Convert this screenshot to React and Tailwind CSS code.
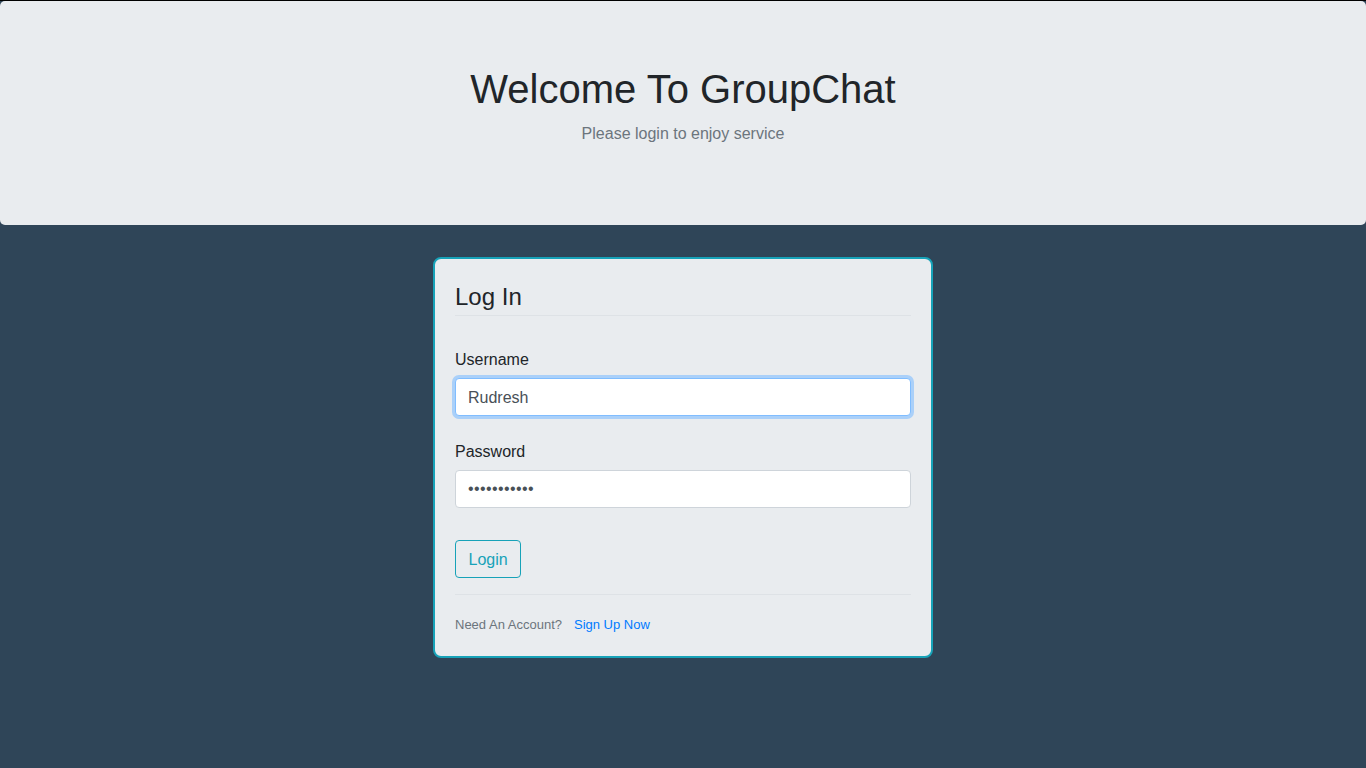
export default function App() {
  return (
    <div
      className="min-h-screen bg-[#2f4558] text-[#212529]"
      style={{ fontFamily: '"Liberation Sans", Arial, sans-serif' }}
    >
      <div className="h-px bg-black" />
      {/* Jumbotron */}
      <div className="bg-[#e9ecef] rounded-[5px] h-[224px] pt-[64px] text-center">
        <h1 className="text-[40px] leading-[48px] mb-[9px]">Welcome To GroupChat</h1>
        <p className="text-base leading-6 text-[#6c757d]">Please login to enjoy service</p>
      </div>

      {/* Login card */}
      <div className="w-[500px] mx-auto mt-[32px] bg-[#e9ecef] border-2 border-[#17a2b8] rounded-[8px] px-[20px] pt-[20px] pb-[19px]">
        <div className="text-2xl leading-[36px] border-b border-[#dee2e6] h-[37px]">Log In</div>

        <label className="block mt-[32px] leading-6 text-base">Username</label>
        <input
          defaultValue="Rudresh"
          className="block w-full mt-[6px] h-[38px] px-3 pt-px bg-white text-[#495057] text-base rounded border border-[#80bdff] outline-none ring-[3px] ring-[#80bdff]/60"
        />

        <label className="block mt-[24px] leading-6 text-base">Password</label>
        <input
          type="password"
          defaultValue="rudresh1234"
          className="block w-full mt-[6px] h-[38px] px-3 bg-white text-[#495057] text-base tracking-[0.4px] rounded border border-[#ced4da] outline-none"
        />

        <button className="mt-[32px] h-[38px] px-[12.5px] pt-px border border-[#17a2b8] text-[#17a2b8] rounded text-base">
          Login
        </button>

        <div className="mt-[16px] border-t border-[#dee2e6] pt-[17px] leading-6">
          <small className="text-[13px] text-[#6c757d]">
            Need An Account?
            <a href="#" className="ml-3 text-[#007bff]">Sign Up Now</a>
          </small>
        </div>
      </div>
    </div>
  );
}
